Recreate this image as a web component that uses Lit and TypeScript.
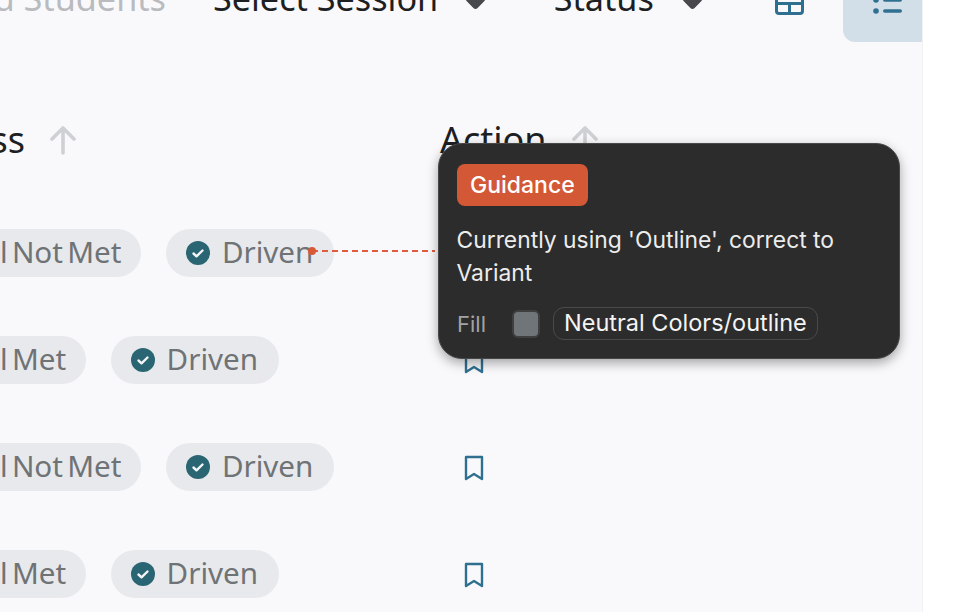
import { LitElement, html, css } from "lit";
import { customElement } from "lit/decorators.js";

const arrow = html`<svg class="arrow" width="26" height="29" viewBox="0 0 26 29" fill="none" stroke="#cfd0d3" stroke-width="3.6" stroke-linecap="round" stroke-linejoin="round"><path d="M13 27V3M2 13 13 2l11 11"/></svg>`;
const check = html`<svg class="check" width="24" height="24" viewBox="0 0 24 24"><circle cx="12" cy="12" r="12" fill="#2a6574"/><path d="M7.5 12.5l3 2.8 6-5.8" fill="none" stroke="#f4f5f7" stroke-width="2.4" stroke-linecap="round" stroke-linejoin="round"/></svg>`;
const bookmark = html`<svg class="bookmark" width="20" height="26" viewBox="0 0 20 26" fill="none" stroke="#2f7090" stroke-width="2.4" stroke-linejoin="round"><path d="M2 2h16v22l-8-5-8 5z"/></svg>`;
const rows = ["Goal Not Met", "Goal Met", "Goal Not Met", "Goal Met"];

@customElement("app-root")
export class AppRoot extends LitElement {
  static styles = css`
    :host { display: block; width: 964px; height: 612px; background: #fff; overflow: hidden; }
    .panel { position: relative; width: 922px; height: 612px; background: #f9f9fc; border-right: 1px solid #f1f1f3; overflow: hidden; font-family: "Noto Sans", "Open Sans", sans-serif; color: #1d1f22; }
    .top { height: 42px; display: flex; align-items: flex-start; overflow: hidden; }
    .filter { font-size: 34.2px; line-height: 46px; margin-top: -25px; white-space: nowrap; flex: none; }
    .mutedbox { width: 213px; flex: none; box-sizing: border-box; padding-right: 47px; display: flex; justify-content: flex-end; }
    .muted { color: #b9bbbf; }
    .caret { width: 15px; height: 15px; background: #47494c; transform: rotate(45deg); border-radius: 3px; margin-top: -8px; flex: none; }
    .c1 { margin-left: 29.5px; margin-right: 71px; }
    .c2 { margin-left: 31.5px; margin-right: 75px; }
    .tbl { flex: none; margin-top: -12px; color: #2f7090; }
    .listbtn { width: 79px; height: 42px; margin-left: 39px; padding-left: 30px; box-sizing: border-box; background: #d3dfe8; border-bottom-left-radius: 12px; display: flex; flex: none; }
    .listbtn svg { margin-top: -6px; flex: none; }
    .head { display: grid; grid-template-columns: 440px 1fr; margin-top: 74px; height: 48px; }
    .hcell { display: flex; align-items: center; gap: 25px; font-size: 36px; line-height: 48px; white-space: nowrap; }
    .hcell.first { justify-content: flex-end; padding-right: 364px; }
    .arrow { flex: none; }
    .body { margin-top: 65px; display: flex; flex-direction: column; gap: 59px; }
    .row { display: grid; grid-template-columns: 440px 1fr; height: 48px; align-items: center; }
    .pills { display: flex; gap: 24.5px; margin-left: -76px; }
    .pill { display: flex; align-items: center; gap: 13px; height: 48px; padding: 0 20px; border-radius: 24px; background: #e8e9ec; color: #6f7375; font-size: 29.6px; word-spacing: -3.5px; white-space: nowrap; flex: none; }
    .pill span { margin-bottom: 3px; }
    .driven { padding: 0 21px 0 20px; gap: 12px; }
    .check { flex: none; }
    .bookmark { display: block; margin-left: 24px; margin-top: 1px; }
    .conn { position: absolute; left: 312px; top: 250px; width: 123px; height: 2px; background: repeating-linear-gradient(90deg, #e25b3c 0 6px, transparent 6px 10px); }
    .dot { position: absolute; left: 308px; top: 247px; width: 8px; height: 8px; border-radius: 50%; background: #d65a38; }
    .tip { position: absolute; left: 438px; top: 143px; width: 462px; height: 216px; box-sizing: border-box; padding: 20px 18px 0 18px; background: #2c2c2c; border: 1px solid #484848; border-radius: 24px; box-shadow: 0 4px 12px rgba(0,0,0,.35); font-family: Inter, sans-serif; color: #f4f4f4; display: flex; flex-direction: column; align-items: flex-start; }
    .tag { height: 42px; box-sizing: border-box; padding: 0 13px; border-radius: 8px; background: #d35836; color: #fff; font-size: 23px; font-weight: 500; line-height: 42px; }
    .msg { margin: 18px 0 0 -0.5px; font-size: 22.85px; line-height: 33px; width: 420px; color: #ececec; }
    .fill { display: flex; align-items: center; margin-top: 17px; height: 33px; }
    .fl { font-size: 22px; color: #a3a3a3; width: 55px; }
    .sw { width: 28px; height: 28px; box-sizing: border-box; background: #6f7578; border: 2px solid #3f3f3f; border-radius: 6px; }
    .tok { margin-left: 13px; height: 33px; box-sizing: border-box; padding: 0 10px; border: 1.5px solid #4a4a4a; border-radius: 11px; font-size: 23.5px; line-height: 30px; color: #f4f4f4; white-space: nowrap; }
  `;
  render() {
    return html`<div class="panel">
      <div class="top">
        <div class="mutedbox"><div class="filter muted">Grad Students</div></div>
        <div class="filter">Select Session</div><div class="caret c1"></div>
        <div class="filter">Status</div><div class="caret c2"></div>
        <svg class="tbl" width="29" height="27" viewBox="0 0 29 27" fill="none" stroke="currentColor" stroke-width="3"><rect x="1.5" y="1.5" width="26" height="24" rx="2.5"/><path d="M1.5 15.5h26M14.5 15v10"/></svg>
        <div class="listbtn"><svg width="30" height="24" viewBox="0 0 30 24" fill="#2f7090"><circle cx="3" cy="6" r="2.8"/><circle cx="3" cy="17" r="2.8"/><rect x="10" y="4.2" width="19" height="3.6" rx="1.8"/><rect x="10" y="15.2" width="19" height="3.6" rx="1.8"/></svg></div>
      </div>
      <div class="head">
        <div class="hcell first"><span>Progress</span>${arrow}</div>
        <div class="hcell"><span>Action</span>${arrow}</div>
      </div>
      <div class="body">
        ${rows.map((r) => html`<div class="row">
          <div class="pills"><div class="pill"><span>${r}</span></div><div class="pill driven">${check}<span>Driven</span></div></div>
          <div>${bookmark}</div>
        </div>`)}
      </div>
      <div class="conn"></div><div class="dot"></div>
      <div class="tip">
        <div class="tag">Guidance</div>
        <p class="msg">Currently using 'Outline', correct to Variant</p>
        <div class="fill"><span class="fl">Fill</span><span class="sw"></span><span class="tok">Neutral Colors/outline</span></div>
      </div>
    </div>`;
  }
}
